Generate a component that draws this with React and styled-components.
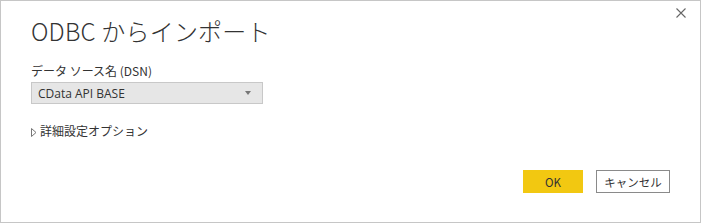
import styled, { createGlobalStyle } from 'styled-components';

const Global = createGlobalStyle`
  html, body { margin: 0; padding: 0; background: #ffffff; }
  body { font-family: "Open Sans", "Noto Sans CJK JP", sans-serif; color: #333333; }
`;

export default function App() {
  return (
    <>
      <Global />
      <Dialog>
        <CloseButton aria-label="close">
          <svg width="10" height="10" viewBox="0 0 10 10">
            <path d="M0.5 0.5 L9.5 9.5 M9.5 0.5 L0.5 9.5" stroke="#666" strokeWidth="1.1" fill="none" />
          </svg>
        </CloseButton>
        <Title>ODBC からインポート</Title>
        <Field>
          <Label>データ ソース名 (DSN)</Label>
          <Select>
            <span>CData API BASE</span>
            <Caret />
          </Select>
        </Field>
        <Expander>
          <svg width="6" height="9" viewBox="0 0 6 9">
            <path d="M0.5 0.5 L5 4.5 L0.5 8.5 Z" stroke="#777" strokeWidth="1" fill="none" />
          </svg>
          <span>詳細設定オプション</span>
        </Expander>
        <Footer>
          <Button primary>OK</Button>
          <Button>キャンセル</Button>
        </Footer>
      </Dialog>
    </>
  );
}

const Dialog = styled.div`
  position: relative;
  box-sizing: border-box;
  width: 701px;
  height: 223px;
  border: 1px solid #c6c6c6;
  padding: 14px 30px 0 30px;
  display: flex;
  flex-direction: column;
`;

const CloseButton = styled.div`
  position: absolute;
  top: 7px;
  right: 14px;
  width: 10px;
  height: 10px;
  display: flex;
`;

const Title = styled.h1`
  margin: 0;
  font-family: "Noto Sans CJK JP", sans-serif;
  font-weight: 300;
  font-size: 24px;
  line-height: 32px;
  color: #333333;
  letter-spacing: 0.2px;
`;

const Field = styled.div`
  margin-top: 15px;
  display: flex;
  flex-direction: column;
  gap: 2px;
`;

const Label = styled.div`
  font-family: "Noto Sans CJK JP", sans-serif;
  font-size: 12px;
  line-height: 18px;
  color: #333333;
`;

const Select = styled.div`
  box-sizing: border-box;
  width: 232px;
  height: 22px;
  background: #e6e6e6;
  border: 1px solid #c8c8c8;
  padding: 0 8px 0 6px;
  display: flex;
  align-items: center;
  justify-content: space-between;
  font-family: "Open Sans", sans-serif;
  font-size: 12px;
  color: #333333;
`;

const Caret = styled.span`
  width: 0;
  height: 0;
  border-left: 3.5px solid transparent;
  border-right: 3.5px solid transparent;
  border-top: 4px solid #777777;
  margin-right: 3px;
`;

const Expander = styled.div`
  margin-top: 18px;
  display: flex;
  align-items: center;
  gap: 3px;
  font-family: "Noto Sans CJK JP", sans-serif;
  font-size: 12px;
  line-height: 18px;
  color: #333333;
  svg { margin-top: 2px; }
`;

const Footer = styled.div`
  margin-top: auto;
  margin-bottom: 29px;
  display: flex;
  justify-content: flex-end;
  gap: 13px;
`;

const Button = styled.div`
  box-sizing: border-box;
  height: 23px;
  padding: 0;
  white-space: nowrap;
  display: flex;
  align-items: center;
  justify-content: center;
  font-family: "Noto Sans CJK JP", sans-serif;
  font-size: 11.5px;
  color: #333333;
  background: ${p => (p.primary ? '#f2c811' : '#ffffff')};
  border: 1px solid ${p => (p.primary ? '#f2c811' : '#8a8a8a')};
  width: ${p => (p.primary ? '60px' : '74px')};
`;
